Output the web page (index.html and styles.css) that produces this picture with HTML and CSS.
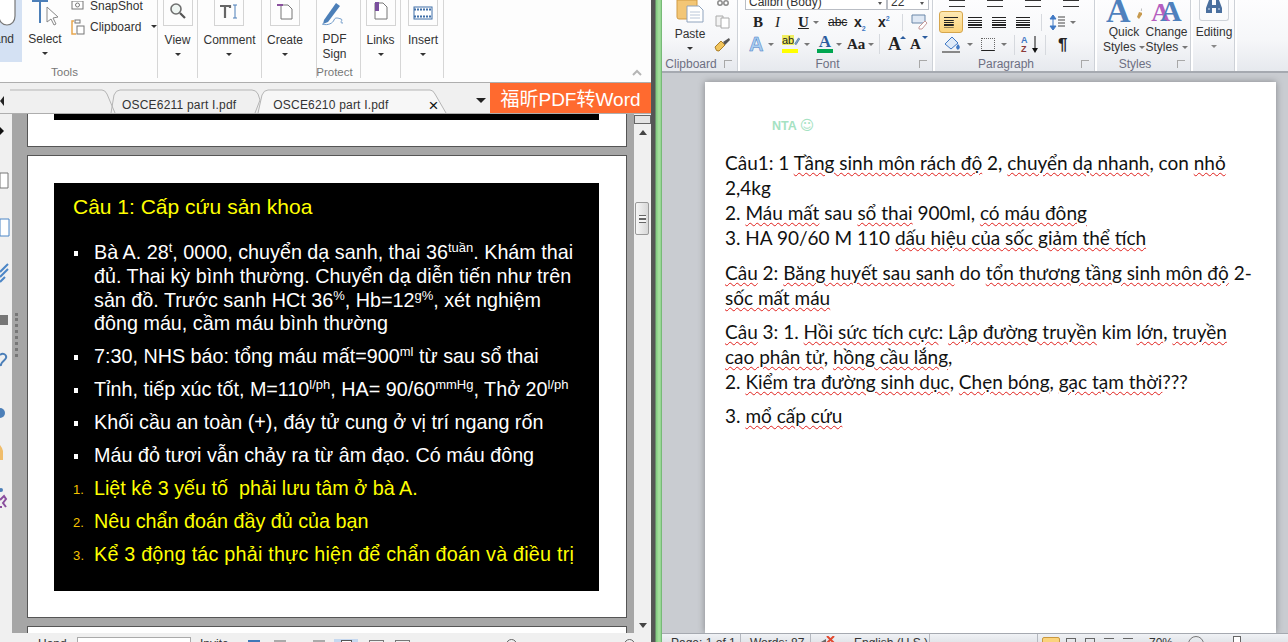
FILE: index.html
```html
<!DOCTYPE html>
<html lang="vi">
<head>
    <meta charset="UTF-8">
    <title>OSCE6210 part I</title>
    <link rel="stylesheet" href="styles.css">
</head>
<body>
<div class="screen">

    <!-- PDF reader window -->
    <section class="pdf">
        <div class="pdf-ribbon">
            <div class="pgroup g-tools">
                <div class="tool-row">
                    <div class="hand">
                        <svg class="hand-icon" width="20" height="26" viewBox="0 0 20 26"><path d="M2 0v16c0 5 3 9 8 9s8-4 8-9V0" fill="#fff" stroke="#777" stroke-width="1.2"/></svg>
                        <span class="hand-label">Hand</span>
                    </div>
                    <div class="select">
                        <svg width="30" height="26" viewBox="0 0 30 26"><path d="M2 1h16M10 1v22" stroke="#4c7fb8" stroke-width="2" fill="none"/><path d="M17 7l0 15 4-3 3 6 2-1-3-6 5-1z" fill="#fff" stroke="#888"/></svg>
                        <span class="tool-label">Select</span>
                        <i class="caret"></i>
                    </div>
                    <div class="small-tools">
                        <div class="small-tool">
                            <svg width="14" height="10" viewBox="0 0 14 10"><rect x="1" y="0" width="11" height="8" fill="#fff" stroke="#777"/><circle cx="6.500" cy="4" r="2" fill="none" stroke="#777"/></svg>
                            <span>SnapShot</span>
                        </div>
                        <div class="small-tool">
                            <svg width="14" height="16" viewBox="0 0 14 16"><path d="M3 2H1v13h4" fill="none" stroke="#e8a64e" stroke-width="1.500"/><rect x="4" y="1" width="5" height="3" fill="#fff" stroke="#777"/><rect x="6" y="7" width="7" height="8" fill="#fff" stroke="#777"/></svg>
                            <span>Clipboard</span>
                            <i class="caret caret-side"></i>
                        </div>
                    </div>
                </div>
                <div class="pgroup-label">Tools</div>
            </div>

            <div class="pgroup g-view">
                <div class="tool">
                    <div class="tool-box"><svg width="18" height="18" viewBox="0 0 18 18"><circle cx="7" cy="7" r="5" fill="#eef5f2" stroke="#6f6f6f" stroke-width="1.600"/><path d="M11 11l5 5" stroke="#555" stroke-width="2.200"/></svg></div>
                    <span class="tool-label">View</span>
                    <i class="caret"></i>
                </div>
            </div>
            <div class="pgroup g-comment">
                <div class="tool">
                    <div class="tool-box"><svg width="20" height="16" viewBox="0 0 20 16"><path d="M1 2h10v2M6 2v12" stroke="#666" stroke-width="2.200" fill="none"/><path d="M14 1h4M16 1v13M14 14h4" stroke="#4c7fb8" fill="none"/></svg></div>
                    <span class="tool-label">Comment</span>
                    <i class="caret"></i>
                </div>
            </div>
            <div class="pgroup g-create">
                <div class="tool">
                    <div class="tool-box"><svg width="16" height="18" viewBox="0 0 16 18"><path d="M4 3h7l4 4v10H4z" fill="#fff" stroke="#777"/><path d="M0 3h6" stroke="#8a4f9e" stroke-width="2"/></svg></div>
                    <span class="tool-label">Create</span>
                    <i class="caret"></i>
                </div>
            </div>
            <div class="pgroup g-protect">
                <div class="tool tool-open">
                    <div class="tool-box tool-box-plain"><svg width="28" height="25" viewBox="0 0 28 25"><path d="M3 19L15 2l4 3-12 16-5 2z" fill="#4c7fb8"/><path d="M1 23c6 2 11-1 12-4s4-2 7-1-3 4 2 4" fill="none" stroke="#6f9ac9"/></svg></div>
                    <span class="tool-label">PDF<br>Sign</span>
                </div>
                <div class="pgroup-label">Protect</div>
            </div>
            <div class="pgroup g-links">
                <div class="tool">
                    <div class="tool-box"><svg width="14" height="18" viewBox="0 0 14 18"><path d="M1 1h8l4 4v12H1z" fill="#fff" stroke="#777"/><rect x="1" y="0" width="4" height="9" fill="#7a4f9e"/></svg></div>
                    <span class="tool-label">Links</span>
                    <i class="caret"></i>
                </div>
            </div>
            <div class="pgroup g-insert">
                <div class="tool">
                    <div class="tool-box"><svg width="20" height="14" viewBox="0 0 20 14"><rect x="1" y="1" width="18" height="12" fill="#fff" stroke="#3f6fa8"/><path d="M1 3.500h18M1 10.500h18" stroke="#3f6fa8" stroke-width="2" stroke-dasharray="2 1"/></svg></div>
                    <span class="tool-label">Insert</span>
                    <i class="caret"></i>
                </div>
            </div>
            <div class="pgroup-rest">
                <svg width="10" height="7" viewBox="0 0 10 7"><path d="M1 6l4-4 4 4" fill="none" stroke="#b5b5b5" stroke-width="2"/></svg>
            </div>
        </div>

        <div class="pdf-tabs">
            <svg class="tab-lines" width="490" height="31" viewBox="0 0 490 31"><path d="M10 7h92q3 0 5 4l8 19" fill="none" stroke="#b5b5b5"/><path d="M111 30l3-18q2-5 6-5h132q4 0 6 4l2 6-5 13" fill="none" stroke="#b5b5b5"/><path d="M258 30l4-18q2-5 6-5h162q3 0 5 4l11 19" fill="#f7f7f7" stroke="#b5b5b5"/></svg>
            <i class="tab-arrow"></i>
            <span class="tab tab-one">OSCE6211 part I.pdf</span>
            <span class="tab tab-two">OSCE6210 part I.pdf</span>
            <span class="tab-close">×</span>
            <i class="tab-menu"></i>
            <div class="convert">福昕PDF转Word</div>
        </div>

        <div class="pdf-main">
            <div class="sidebar">
                <svg width="10" height="400" viewBox="0 0 10 400">
                    <path d="M0 5l4 4-4 4z" fill="#111"/>
                    <path d="M0 51h8v15H0z" fill="#fff" stroke="#777"/>
                    <path d="M0 97h9v17H0z" fill="#fff" stroke="#4c86c6"/>
                    <path d="M0 150l8-8M0 155l8-8M0 160l5-5" stroke="#4c86c6" stroke-width="2"/>
                    <path d="M0 193h8v10H0z" fill="#777"/>
                    <path d="M0 233c3-3 7 0 6 3s-6 4-5 8" fill="none" stroke="#4c7fb8" stroke-width="2"/>
                    <circle cx="0" cy="291" r="5" fill="#4c7fb8"/>
                    <path d="M0 338v-15l2 3 1 3v9z" fill="#f0bd6b"/>
                    <circle cx="1" cy="368" r="2" fill="#4c7fb8"/>
                    <path d="M0 378l4-4 2 3-3 4 3 4M0 385h2" fill="none" stroke="#8a4f9e" stroke-width="2"/>
                </svg>
            </div>
            <div class="viewer">
                <div class="splitter"></div>
                <div class="pages">
                    <div class="page page-top"><div class="slide-strip"></div></div>
                    <div class="page page-slide">
                        <div class="slide">
                            <h2 class="slide-title">Câu 1: Cấp cứu sản khoa</h2>
                            <ul class="facts">
                                <li>Bà A. 28<sup>t</sup>, 0000, chuyển dạ sanh, thai 36<sup>tuần</sup>. Khám thai<br>đủ. Thai kỳ bình thường. Chuyển dạ diễn tiến như trên<br>sản đồ. Trước sanh HCt 36<sup>%</sup>, Hb=12<sup>g%</sup>, xét nghiệm<br>đông máu, cầm máu bình thường</li>
                                <li>7:30, NHS báo: tổng máu mất=900<sup>ml</sup> từ sau sổ thai</li>
                                <li>Tỉnh, tiếp xúc tốt, M=110<sup>l/ph</sup>, HA= 90/60<sup>mmHg</sup>, Thở 20<sup>l/ph</sup></li>
                                <li>Khối cầu an toàn (+), đáy tử cung ở vị trí ngang rốn</li>
                                <li>Máu đỏ tươi vẫn chảy ra từ âm đạo. Có máu đông</li>
                            </ul>
                            <ol class="asks">
                                <li>Liệt kê 3 yếu tố&nbsp; phải lưu tâm ở bà A.</li>
                                <li>Nêu chẩn đoán đầy đủ của bạn</li>
                                <li class="ask-wide">Kể 3 động tác phải thực hiện để chẩn đoán và điều trị</li>
                            </ol>
                        </div>
                    </div>
                    <div class="page page-next"></div>
                </div>
            </div>
            <div class="scrollbar">
                <div class="scroll-head"></div>
                <i class="scroll-up"></i>
                <div class="scroll-thumb"><span></span></div>
                <i class="scroll-down"></i>
            </div>
        </div>

        <div class="pdf-status">
            <span class="pst pst-a">Hand</span>
            <span class="pst-input"></span>
            <span class="pst pst-b">Invite</span>
            <span class="pst-icon pst-blue"></span>
            <span class="pst-icon pst-grey"></span>
            <span class="pst-icon pst-grey pst-c"></span>
            <span class="pst-active"><i></i></span>
            <span class="pst-icon pst-outline"></span>
            <span class="pst-icon pst-outline"></span>
            <span class="pst-round pst-d"></span>
            <span class="pst-round pst-e"></span>
        </div>
    </section>

    <div class="divider"></div>

    <!-- Word window -->
    <section class="word">
        <div class="word-ribbon">
            <div class="wgroup w-clipboard">
                <div class="w-body clip-body">
                    <div class="paste">
                        <svg width="28" height="23" viewBox="0 0 28 23"><path d="M1 0h20v17q0 2-2 2H3q-2 0-2-2z" fill="#f3c675" stroke="#d19b45"/><path d="M11 6h12l4 4v12H11z" fill="#fff" stroke="#8fa3bd"/><path d="M14 12h10M14 15h10M14 18h10" stroke="#b9c6d8"/></svg>
                        <span class="w-label">Paste</span>
                        <i class="caret"></i>
                    </div>
                    <div class="clip-small">
                        <svg width="12" height="7" viewBox="0 0 12 7"><circle cx="3" cy="3" r="2.200" fill="none" stroke="#8a8a8a" stroke-width="1.500"/><circle cx="9" cy="3" r="2.200" fill="none" stroke="#8a8a8a" stroke-width="1.500"/></svg>
                        <svg width="16" height="14" viewBox="0 0 16 14"><path d="M1 1h7v10H1z" fill="#f3f3f3" stroke="#aaa"/><path d="M6 3h8v10H6z" fill="#fff" stroke="#aaa"/></svg>
                        <svg width="17" height="16" viewBox="0 0 17 16"><path d="M1 10l6-6 4 4-6 6q-3 1-4-4z" fill="#f2c55c" stroke="#a97f2c"/><path d="M9 5l6-4 1 2-5 5z" fill="#555"/></svg>
                    </div>
                </div>
                <div class="w-name">Clipboard<i class="launcher"></i></div>
            </div>

            <div class="wgroup w-font">
                <div class="w-body">
                    <div class="font-combos">
                        <span class="combo combo-name">Calibri (Body)<i class="combo-caret"></i></span>
                        <span class="combo combo-size">22<i class="combo-caret"></i></span>
                    </div>
                    <div class="w-row row-font-a">
                        <b class="fb fb-b">B</b>
                        <i class="fb fb-i">I</i>
                        <span class="fb fb-u">U</span><i class="caret caret-thin c-u"></i>
                        <span class="fb fb-abc">abc</span>
                        <span class="fb fb-x">x<sub>2</sub></span>
                        <span class="fb fb-x">x<sup>2</sup></span>
                        <i class="rsep"></i>
                        <svg class="clear-fmt" width="17" height="16" viewBox="0 0 17 16"><path d="M1 1h13v8H1z" fill="#dfe8f4" stroke="#6b87a8"/><path d="M8 13l6-6 2 2-5 6H8z" fill="#fff" stroke="#c59a9a"/></svg>
                    </div>
                    <div class="w-row row-font-b">
                        <span class="fx-a">A</span><i class="caret caret-thin c-a1"></i>
                        <span class="hl"><span class="hl-text">ab</span><svg width="8" height="12" viewBox="0 0 8 12"><path d="M1 10l5-8 2 1-5 8z" fill="#7fa7d4" stroke="#4d6f96"/></svg><i class="hl-bar"></i></span><i class="caret caret-thin c-a2"></i>
                        <span class="col-a">A<i class="col-bar"></i></span><i class="caret caret-thin c-a3"></i>
                        <span class="aa">Aa</span><i class="caret caret-thin c-a4"></i>
                        <i class="rsep rsep-tall"></i>
                        <span class="grow">A<i class="up"></i></span>
                        <span class="shrink">A<i class="down"></i></span>
                    </div>
                </div>
                <div class="w-name">Font<i class="launcher"></i></div>
            </div>

            <div class="wgroup w-para">
                <div class="w-body">
                    <div class="para-stubs"><i></i><i></i><i></i><i></i></div>
                    <div class="w-row row-para-a">
                        <span class="align align-on"><i class="lines l-left"></i></span>
                        <span class="align"><i class="lines l-center"></i></span>
                        <span class="align"><i class="lines l-right"></i></span>
                        <span class="align"><i class="lines"></i></span>
                        <i class="rsep"></i>
                        <svg class="spacing" width="20" height="17" viewBox="0 0 20 17"><path d="M4 1l3 4H1zM4 16l3-4H1zM4 5v7" fill="#3f78c4" stroke="#3f78c4"/><path d="M9 3h7M9 6h7M9 9h7M9 12h7" stroke="#444"/></svg><i class="caret caret-thin"></i>
                    </div>
                    <div class="w-row row-para-b">
                        <svg class="shade" width="24" height="20" viewBox="0 0 24 20"><path d="M4 9l7-7 6 6-7 6z" fill="#dfeaf8" stroke="#3f78c4"/><path d="M17 9q3 3 1 5t-3-2z" fill="#3f78c4"/><path d="M1 17h18" stroke="#888" stroke-width="2"/></svg><i class="caret caret-thin c-b1"></i>
                        <i class="borders"></i><i class="caret caret-thin c-b2"></i>
                        <i class="rsep rsep-tall"></i>
                        <span class="sort"><span class="sort-a">A</span><span class="sort-z">Z</span></span>
                        <svg class="sort-arrow" width="6" height="18" viewBox="0 0 6 18"><path d="M3 0v13" stroke="#111"/><path d="M0 12h6l-3 5z" fill="#111"/></svg>
                        <i class="rsep rsep-tall"></i>
                        <span class="pilcrow">¶</span>
                    </div>
                </div>
                <div class="w-name">Paragraph<i class="launcher"></i></div>
            </div>

            <div class="wgroup w-styles">
                <div class="w-body styles-body">
                    <div class="style-btn style-quick">
                        <span class="style-a">A<svg class="brush" width="12" height="20" viewBox="0 0 12 20"><path d="M11 0L6 11" stroke="#b9b9b9" stroke-width="3"/><path d="M3 12l4 1-4 6-2-2z" fill="#c79a4f"/></svg></span>
                        <span class="w-label">Quick<br>Styles <i class="caret caret-thin caret-inline"></i></span>
                    </div>
                    <div class="style-btn style-change">
                        <span class="style-a style-a2"><span>A</span>A</span>
                        <span class="w-label">Change<br>Styles <i class="caret caret-thin caret-inline"></i></span>
                    </div>
                </div>
                <div class="w-name">Styles<i class="launcher"></i></div>
            </div>

            <div class="wgroup w-editing">
                <div class="edit-box"><svg width="16" height="13" viewBox="0 0 16 13"><path d="M3 0h3v5h4V0h3l3 8v5h-6V8H6v5H0V8z" fill="#4a6f9e"/><path d="M2 9h2M12 9h2" stroke="#cfe0f2"/></svg></div>
                <span class="w-label">Editing</span>
                <i class="caret caret-grey"></i>
            </div>
        </div>

        <div class="doc-area">
            <div class="doc-page">
                <p class="nta">NTA <span class="smile">☺</span></p>
                <p class="dline dline-first"><span>Câu1: 1 </span><span class="sp">Tầng sinh môn rách độ</span> 2, <span class="sp">chuyển dạ nhanh</span>, con <span class="sp">nhỏ</span><br><span>2,4kg</span><br>2. <span class="sp">Máu mất</span> sau <span class="sp">sổ thai</span> 900ml, <span class="sp">có máu đông</span><br>3. HA 90/60 M 110 <span class="sp">dấu hiệu của sốc giảm thể tích</span></p>
                <p class="dline"><span class="sp">Câu</span> 2: <span class="sp">Băng huyết sau sanh</span> do <span class="sp">tổn thương tầng sinh môn độ</span> 2-<br><span class="sp">sốc mất máu</span></p>
                <p class="dline"><span class="sp">Câu</span> 3: 1. <span class="sp">Hồi sức tích cực</span>: <span class="sp">Lập đường truyền</span> kim <span class="sp">lớn</span>, <span class="sp">truyền</span><br><span class="sp">cao phân tử</span>, <span class="sp">hồng cầu lắng</span>,<br>2. <span class="sp">Kiểm tra đường sinh dục</span>, <span class="sp">Chẹn bóng</span>, <span class="sp">gạc tạm thời</span>???</p>
                <p class="dline">3. <span class="sp">mổ cấp cứu</span></p>
            </div>
        </div>

        <div class="word-status">
            <span class="wst wst-page">Page: 1 of 1</span>
            <span class="wst wst-words">Words: 87</span>
            <span class="wst wst-proof"><svg width="16" height="8" viewBox="0 0 16 8"><path d="M1 6l5-3v5" fill="#666"/><path d="M7 0l7 7M14 0L7 7" stroke="#e2492f" stroke-width="2"/></svg></span>
            <span class="wst wst-lang">English (U.S.)</span>
            <span class="wst wst-gap"></span>
            <span class="view-on"><i></i></span>
            <span class="view-icons"><i></i><i></i><i></i><i></i></span>
            <span class="zoom-pct">70%</span>
            <span class="zoom-minus"></span>
            <span class="zoom-thumb"></span>
        </div>
    </section>
</div>
</body>
</html>
```

FILE: styles.css
```css
* {
    box-sizing: border-box;
}
html, body {
    margin: 0;
    padding: 0;
    overflow: hidden;
}
body {
    font-family: "Liberation Sans", "Noto Sans CJK SC", sans-serif;
    background: #f0f0f0;
}
i {
    font-style: normal;
}
.screen {
    display: flex;
    width: 1288px;
    height: 642px;
    overflow: hidden;
}

/* pdf window */
.pdf {
    width: 651px;
    height: 642px;
    display: flex;
    flex-direction: column;
    background: #f0f0f0;
    flex: none;
}
.pdf-ribbon {
    height: 83px;
    display: flex;
    background: #fdfdfd;
    border-bottom: 1px solid #aeaeae;
    color: #333;
    font-size: 12px;
    overflow: hidden;
    flex: none;
}
.pgroup {
    height: 78px;
    border-right: 1px solid #d6d6d6;
    display: flex;
    flex-direction: column;
    align-items: center;
    position: relative;
    flex: none;
}
.g-tools { width: 158px; }
.g-view { width: 40px; }
.g-comment { width: 64px; }
.g-create { width: 55px; padding-right: 8px; }
.g-protect { width: 44px; padding-right: 8px; }
.g-links { width: 40px; }
.g-insert { width: 43px; padding-left: 2px; }
.pgroup-rest {
    flex: 1;
    display: flex;
    justify-content: flex-end;
    align-items: flex-end;
    padding: 0 9px 6px 0;
}
.tool-row {
    display: flex;
    width: 100%;
    height: 62px;
}
.pgroup-label {
    margin-top: auto;
    height: 12px;
    line-height: 12px;
    font-size: 11.5px;
    color: #777;
    white-space: nowrap;
}
.g-tools .pgroup-label {
    margin-right: 28px;
}
.hand {
    width: 22px;
    height: 62px;
    background: #d4e1f3;
    display: flex;
    flex-direction: column;
    align-items: flex-end;
    overflow: hidden;
    flex: none;
}
.hand-icon {
    margin-right: 5px;
}
.hand-label {
    margin: 6px 8px 0 0;
    line-height: 14px;
}
.select {
    width: 36px;
    margin-left: 5px;
    display: flex;
    flex-direction: column;
    align-items: center;
    flex: none;
}
.select .tool-label {
    margin-top: 6px;
}
.tool-label, .w-label {
    line-height: 15px;
    text-align: center;
    white-space: nowrap;
}
.caret {
    display: block;
    width: 0;
    height: 0;
    margin-top: 5px;
    border: 3px solid transparent;
    border-top: 3px solid #333;
    border-bottom: 0;
}
.caret-side {
    margin: 0 0 0 5px;
}
.small-tools {
    margin-left: 8px;
    display: flex;
    flex-direction: column;
    gap: 6px;
}
.small-tool {
    display: flex;
    align-items: center;
    gap: 5px;
    height: 15px;
    white-space: nowrap;
}
.small-tool:first-child {
    margin-top: -2px;
}
.tool {
    display: flex;
    flex-direction: column;
    align-items: center;
}
.tool-box {
    width: 30px;
    height: 26px;
    border: 1px solid #d4d4d4;
    border-top: 0;
    display: flex;
    align-items: flex-end;
    justify-content: center;
    padding-bottom: 5px;
    margin-bottom: 7px;
}
.tool-box-plain {
    border: 0;
    padding-bottom: 0;
    margin-bottom: 6px;
}
.pdf-tabs {
    height: 31px;
    display: flex;
    align-items: center;
    position: relative;
    font-size: 12px;
    color: #333;
    border-bottom: 1px solid #aeaeae;
    flex: none;
}
.tab-lines {
    position: absolute;
    left: 0;
    top: 0;
}
.tab-arrow {
    position: absolute;
    left: 0;
    top: 13px;
    border: 5px solid transparent;
    border-left: 0;
    border-right: 4px solid #222;
}
.tab {
    position: relative;
    white-space: nowrap;
    padding-top: 13px;
    letter-spacing: 0.2px;
}
.tab-one { margin-left: 122px; }
.tab-two { margin-left: 37px; }
.tab-close {
    position: relative;
    margin-left: 40px;
    padding-top: 15px;
    font-size: 17px;
    line-height: 14px;
    color: #111;
}
.tab-menu {
    position: relative;
    margin-left: 38px;
    margin-top: 5px;
    border: 5px solid transparent;
    border-top: 5px solid #222;
    border-bottom: 0;
}
.convert {
    margin-left: auto;
    width: 161px;
    height: 30px;
    background: #ff6a2f;
    color: #fff;
    font-size: 19px;
    line-height: 33px;
    text-align: center;
    white-space: nowrap;
}
.pdf-main {
    flex: 1;
    min-height: 0;
    display: flex;
}
.sidebar {
    width: 12px;
    background: #f0f0f0;
    flex: none;
    padding-top: 8px;
    overflow: hidden;
}
.viewer {
    width: 622px;
    background: #a6a6a6;
    display: flex;
    overflow: hidden;
    flex: none;
}
.splitter {
    width: 15px;
    height: 44px;
    margin-top: 199px;
    margin-left: 3px;
    border-left: 3px dotted #777;
    flex: none;
    margin-right: -3px;
}
.pages {
    width: 600px;
    display: flex;
    flex-direction: column;
    gap: 8px;
    flex: none;
}
.page {
    background: #fff;
    border: 1px solid #555;
    flex: none;
}
.page-top {
    height: 33px;
    border-top: 0;
    padding: 0 27px 0 26px;
}
.slide-strip {
    height: 6px;
    background: #000;
}
.page-slide {
    height: 463px;
    padding: 27px 27px 27px 26px;
}
.page-next {
    height: 20px;
    border-bottom: 0;
}
.slide {
    height: 408px;
    background: #000;
    color: #fff;
    padding: 12px 19px 0;
    font-size: 19.75px;
    line-height: 23.75px;
    white-space: nowrap;
}
.slide-title {
    margin: 0 0 22px;
    font-size: 21px;
    line-height: 24px;
    font-weight: normal;
    color: #ff0;
}
.facts, .asks {
    margin: 0;
    padding: 0 0 0 21px;
    list-style: none;
}
.asks {
    counter-reset: ask;
    color: #ff0;
}
.facts li, .asks li {
    margin-bottom: 9.25px;
    position: relative;
}
.facts li::before {
    content: "";
    position: absolute;
    left: -20px;
    top: 10px;
    width: 4px;
    height: 5px;
    background: #fff;
}
.asks li {
    counter-increment: ask;
}
.asks li::before {
    content: counter(ask) ".";
    position: absolute;
    left: -21px;
    top: 1px;
    font-size: 13px;
    color: #f5c400;
}
.asks .ask-wide {
    letter-spacing: 0.21px;
}
.slide sup {
    font-size: 13px;
    line-height: 0;
    vertical-align: 7px;
}
.scrollbar {
    width: 17px;
    background: #f0f0f0;
    position: relative;
    flex: none;
}
.scroll-head {
    height: 9px;
    margin: 1px 0 0;
    background: #e4e4e4;
    border: 1px solid #666;
}
.scroll-up {
    position: absolute;
    left: 5px;
    top: 16px;
    border: 4px solid transparent;
    border-bottom: 5px solid #444;
    border-top: 0;
}
.scroll-thumb {
    position: absolute;
    left: 1px;
    top: 88px;
    width: 14px;
    height: 33px;
    background: linear-gradient(90deg, #f6f6f6, #d8d8d8);
    border: 1px solid #999;
    border-radius: 2px;
    display: flex;
    align-items: center;
    justify-content: center;
}
.scroll-thumb span {
    width: 7px;
    height: 8px;
    border-top: 1px solid #666;
    border-bottom: 1px solid #666;
    background: linear-gradient(#f6f6f6 37%, #666 37%, #666 62%, #f6f6f6 62%);
}
.scroll-down {
    position: absolute;
    left: 5px;
    bottom: 5px;
    border: 4px solid transparent;
    border-top: 5px solid #444;
    border-bottom: 0;
}
.pdf-status {
    height: 9px;
    background: #f0f0f0;
    display: flex;
    align-items: flex-start;
    font-size: 12px;
    color: #333;
    overflow: hidden;
    flex: none;
}
.pst {
    line-height: 12px;
    margin-top: 5px;
}
.pst-a { margin-left: 38px; width: 39px; }
.pst-input {
    width: 114px;
    height: 14px;
    margin-top: 4px;
    background: #fff;
    border: 1px solid #aaa;
}
.pst-b { margin-left: 9px; width: 48px; }
.pst-icon {
    width: 12px;
    height: 12px;
    margin-top: 7px;
}
.pst-blue { background: #3f78b8; }
.pst-grey { background: #aaa; margin-left: 14px; }
.pst-c { margin-left: 27px; }
.pst-active {
    width: 24px;
    height: 9px;
    margin: 6px 5px 0 9px;
    background: #c5d8f0;
    display: flex;
    justify-content: center;
    padding-top: 1px;
}
.pst-active i {
    width: 11px;
    height: 10px;
    background: #fff;
    border: 1px solid #555;
}
.pst-outline {
    width: 15px;
    margin-left: 6px;
    border: 1px solid #777;
}
.pst-outline + .pst-outline {
    margin-left: 11px;
}
.pst-round {
    width: 11px;
    height: 11px;
    margin-top: 6px;
    border: 1px solid #666;
    border-radius: 50%;
}
.pst-d { margin-left: 96px; }
.pst-e { margin-left: 107px; }

.divider {
    width: 11px;
    flex: none;
    background: linear-gradient(90deg, #555 0, #555 4px, #7fc97f 5px, #a9e0a0 8px, #8fd48f 10px, #5f9f5f 11px);
}

/* word window */
.word {
    flex: 1;
    min-width: 0;
    height: 642px;
    display: flex;
    flex-direction: column;
    background: #c9ccd1;
}
.word-ribbon {
    height: 73px;
    display: flex;
    background: linear-gradient(#fdfdfe, #f6f7f9 55%, #e6e9ee);
    border-bottom: 2px solid #a5a9b0;
    font-size: 12px;
    color: #333;
    flex: none;
    overflow: hidden;
}
.wgroup {
    height: 71px;
    display: flex;
    flex-direction: column;
    border-right: 2px solid #fff;
    box-shadow: inset -1px 0 0 #cdd1d7;
    flex: none;
}
.w-clipboard { width: 78px; }
.w-font { width: 195px; }
.w-para { width: 162px; }
.w-styles { width: 96px; }
.w-editing {
    width: 44px;
    align-items: center;
}
.w-body {
    height: 58px;
    flex: none;
}
.w-name {
    height: 13px;
    font-size: 12px;
    line-height: 13px;
    text-align: center;
    padding-right: 18px;
    color: #6d6f82;
    position: relative;
}
.launcher {
    position: absolute;
    right: 6px;
    top: 2px;
    width: 8px;
    height: 8px;
    border: 1px solid #a8a8a8;
    border-width: 1px 0 0 1px;
}
.clip-body {
    display: flex;
    padding-left: 14px;
}
.paste {
    width: 28px;
    display: flex;
    flex-direction: column;
    align-items: center;
}
.paste .w-label {
    margin-top: 4px;
}
.clip-small {
    display: flex;
    flex-direction: column;
    align-items: center;
    gap: 8px;
    margin-left: 10px;
}
.font-combos {
    display: flex;
    height: 11px;
    margin-left: 5px;
    font-size: 12px;
}
.combo {
    background: #fff;
    border: 1px solid #b9bdc4;
    border-top: 0;
    height: 10px;
    line-height: 4px;
    padding-left: 3px;
    overflow: hidden;
    position: relative;
}
.combo-name { width: 142px; }
.combo-size { width: 42px; }
.combo-caret {
    position: absolute;
    right: 4px;
    top: 2px;
    border: 2px solid transparent;
    border-top: 3px solid #555;
    border-bottom: 0;
}
.w-row {
    display: flex;
    align-items: center;
}
.row-font-a {
    height: 22px;
    padding-left: 13px;
}
.fb {
    font-family: "Liberation Serif", serif;
    font-size: 15px;
    color: #222;
    line-height: 16px;
    flex: none;
}
.fb-b { font-weight: bold; width: 22px; }
.fb-i { font-style: italic; width: 23px; }
.fb-u { font-weight: bold; text-decoration: underline; width: 15px; }
.fb-abc { font-size: 12px; text-decoration: line-through; width: 24px; margin-left: 9px; margin-right: 2px; font-family: "Liberation Sans", sans-serif; }
.fb-x { font-weight: bold; width: 24px; font-family: "Liberation Sans", sans-serif; font-size: 14px; }
.fb-x sub, .fb-x sup {
    font-size: 7px;
    color: #3f78c4;
    line-height: 0;
}
.caret-thin {
    margin: 0;
    border-top-color: #777;
}
.rsep {
    width: 1px;
    height: 17px;
    background: #d6d9de;
    margin: 0 8px 0 0;
    flex: none;
}
.rsep-tall { height: 20px; }
.row-font-b {
    height: 22px;
    padding-left: 9px;
}
.fx-a {
    font-size: 20px;
    line-height: 22px;
    color: #a9cdf0;
    font-weight: bold;
    -webkit-text-stroke: 0.5px #3f78c4;
    width: 19px;
}
.hl {
    position: relative;
    width: 18px;
    height: 18px;
    display: flex;
    margin-left: 8px;
    font-size: 11px;
    color: #222;
}
.hl-text {
    background: #f0ee60;
    height: 10px;
    line-height: 10px;
}
.hl-bar {
    position: absolute;
    left: 0;
    bottom: 0;
    width: 16px;
    height: 4px;
    background: #ff0;
}
.col-a {
    position: relative;
    width: 16px;
    height: 20px;
    margin-left: 7px;
    font-family: "Liberation Serif", serif;
    font-size: 17px;
    line-height: 15px;
    font-weight: bold;
    color: #2b5c9e;
    text-align: center;
}
.col-bar {
    position: absolute;
    left: 0;
    bottom: 1px;
    width: 16px;
    height: 4px;
    background: #00a651;
}
.aa {
    font-family: "Liberation Serif", serif;
    font-weight: bold;
    font-size: 15px;
    margin-left: 5px;
    color: #222;
    width: 21px;
}
.c-u { margin-right: 0; }
.c-a2 { margin-left: 4px; }
.c-a3 { margin-left: 3px; }
.c-a4 { margin-right: 5px; }
.grow, .shrink {
    position: relative;
    font-family: "Liberation Serif", serif;
    font-weight: bold;
    color: #222;
    width: 22px;
    line-height: 20px;
}
.grow { font-size: 18px; }
.shrink { font-size: 15px; }
.up, .down {
    position: absolute;
    left: 12px;
    top: 2px;
    border: 3px solid transparent;
}
.up { border-bottom: 3px solid #2b5c9e; border-top: 0; }
.down { border-top: 3px solid #2b5c9e; border-bottom: 0; }
.para-stubs {
    display: flex;
    gap: 22px;
    height: 11px;
    padding-left: 14px;
}
.para-stubs i {
    width: 16px;
    height: 7px;
    border-top: 1px solid #333;
    border-bottom: 1px solid #333;
}
.row-para-a {
    height: 22px;
    padding-left: 4px;
}
.align {
    width: 24px;
    height: 22px;
    display: flex;
    align-items: center;
    justify-content: center;
    flex: none;
}
.align-on {
    background: linear-gradient(#fde9b4, #fbd37c);
    border: 1px solid #d6a64c;
    border-radius: 3px;
}
.lines {
    width: 14px;
    height: 11px;
    background: repeating-linear-gradient(#222 0 1px, transparent 1px 2.500px);
}
.l-left { clip-path: polygon(0 0, 100% 0, 100% 20%, 70% 20%, 70% 100%, 0 100%); }
.row-para-a .rsep { margin: 0 7px 0 6px; }
.spacing { margin-right: 1px; }
.row-para-b {
    height: 23px;
    padding-left: 6px;
}
.c-b1 { margin: 0 8px 0 2px; }
.borders {
    width: 14px;
    height: 13px;
    border: 1px dotted #666;
    border-bottom: 1px solid #222;
    flex: none;
}
.c-b2 { margin: 0 7px 0 6px; }
.sort {
    width: 9px;
    display: flex;
    flex-direction: column;
    font-weight: bold;
    font-size: 9px;
    line-height: 9px;
    margin-right: 2px;
}
.sort-a { color: #3f78c4; }
.sort-z { color: #8b3a3a; }
.row-para-b .rsep { margin: 0 6px 0 0; }
.row-para-b .sort-arrow { margin-right: 7px; }
.pilcrow {
    font-size: 17px;
    font-weight: bold;
    color: #222;
    margin-left: 6px;
}
.styles-body {
    display: flex;
    padding-left: 2px;
}
.style-btn {
    display: flex;
    flex-direction: column;
    align-items: center;
}
.style-quick { width: 44px; margin-left: 3px; }
.style-change { width: 41px; }
.style-a {
    position: relative;
    height: 25px;
    font-family: "Liberation Serif", serif;
    font-size: 34px;
    font-weight: bold;
    line-height: 21px;
    color: #4f81bd;
    overflow: hidden;
    flex: none;
}
.brush {
    position: absolute;
    right: -6px;
    top: 0;
}
.style-quick .style-a {
    width: 36px;
}
.style-a2 {
    font-size: 30px;
}
.style-a2 span {
    color: #b55fc0;
    margin-right: -10px;
    font-size: 26px;
}
.caret-inline {
    display: inline-block;
    vertical-align: 2px;
}
.edit-box {
    width: 30px;
    height: 21px;
    border: 1px solid #cfd3d9;
    border-top: 0;
    border-radius: 0 0 3px 3px;
    display: flex;
    justify-content: center;
    align-items: flex-start;
    margin-bottom: 4px;
}
.caret-grey {
    margin-top: 5px;
    border-top-color: #888;
}
.doc-area {
    flex: 1;
    min-height: 0;
    padding: 9px 12px 0 43px;
    background: #c9ccd1;
    overflow: hidden;
}
.doc-page {
    height: 100%;
    background: #fff;
    padding: 34px 20px 0;
    font-family: Lato, "Noto Sans", sans-serif;
    font-size: 19px;
    line-height: 25px;
    color: #111;
    white-space: nowrap;
    box-shadow: 0 0 7px rgba(0, 0, 0, 0.35);
}
.nta {
    margin: 0 0 15px 47px;
    font-family: "Liberation Sans", sans-serif;
    font-size: 12.5px;
    line-height: 18px;
    font-weight: bold;
    color: #a5e2c2;
}
.smile {
    font-family: "DejaVu Sans", sans-serif;
    font-weight: normal;
    font-size: 14px;
}
.dline {
    margin: 0 0 9px;
}
.dline-first {
    margin-bottom: 10px;
}
.sp {
    text-decoration: underline wavy #e0201c 1px;
    text-underline-offset: 2px;
}
.word-status {
    height: 9px;
    background: linear-gradient(#f0f2f5, #e2e5e9);
    border-top: 1px solid #a5a9b0;
    display: flex;
    font-size: 12px;
    color: #333;
    overflow: hidden;
    flex: none;
}
.wst {
    height: 9px;
    line-height: 12px;
    padding-top: 3px;
    border-right: 1px solid #b5b9c0;
    white-space: nowrap;
    flex: none;
}
.wst-page { width: 79px; padding-left: 9px; }
.wst-words { width: 70px; padding-left: 9px; }
.wst-proof { width: 32px; padding: 0 0 0 9px; border: 0; }
.wst-lang { width: 87px; padding-left: 11px; }
.wst-gap { width: 108px; }
.view-on {
    width: 18px;
    height: 10px;
    margin-left: 4px;
    margin-top: 3px;
    background: #fbd37c;
    border: 1px solid #c9983f;
    border-radius: 2px;
    flex: none;
}
.view-icons {
    display: flex;
    gap: 9px;
    margin: 4px 0 0 6px;
}
.view-icons i {
    width: 10px;
    height: 9px;
    border: 1px solid #666;
}
.view-icons i:nth-child(n+3) {
    border-width: 1px 0 0;
}
.zoom-pct {
    margin-left: 16px;
    padding-top: 3px;
    line-height: 12px;
}
.zoom-minus {
    width: 16px;
    height: 16px;
    margin: 2px 0 0 15px;
    border: 1px solid #777;
    border-radius: 50%;
    flex: none;
}
.zoom-thumb {
    width: 8px;
    height: 10px;
    margin: 2px 0 0 29px;
    background: #fff;
    border: 1px solid #666;
    flex: none;
}
```
